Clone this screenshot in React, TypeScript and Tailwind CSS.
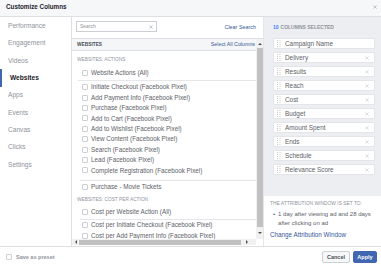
import React from "react";

const sideItems = ["Performance", "Engagement", "Videos", "Websites", "Apps", "Events", "Canvas", "Clicks", "Settings"];

const pixelEvents = [
  "Initiate Checkout (Facebook Pixel)",
  "Add Payment Info (Facebook Pixel)",
  "Purchase (Facebook Pixel)",
  "Add to Cart (Facebook Pixel)",
  "Add to Wishlist (Facebook Pixel)",
  "View Content (Facebook Pixel)",
  "Search (Facebook Pixel)",
  "Lead (Facebook Pixel)",
  "Complete Registration (Facebook Pixel)",
];

const selected = [
  "Campaign Name",
  "Delivery",
  "Results",
  "Reach",
  "Cost",
  "Budget",
  "Amount Spent",
  "Ends",
  "Schedule",
  "Relevance Score",
];

function Cross({ size = 5, color = "#90949c" }: { size?: number; color?: string }) {
  return (
    <svg width={size} height={size} viewBox="0 0 10 10">
      <path d="M1 1L9 9M9 1L1 9" stroke={color} strokeWidth="1.3" />
    </svg>
  );
}

function Box() {
  return <span className="w-[6px] h-[6px] shrink-0 rounded-[1px] border border-[#ccd0d5] bg-white" />;
}

function Row({ label, h = "h-[10.4px]" }: { label: string; h?: string }) {
  return (
    <div className={`flex items-center ${h} pl-[10px] gap-[3px] whitespace-nowrap`}>
      <Box />
      <span className="text-[6.3px] text-[#5d6168]">{label}</span>
    </div>
  );
}

function Handle() {
  return (
    <svg width="4" height="8" viewBox="0 0 4 8" className="shrink-0">
      {[0, 1, 2, 3].map((r) =>
        [0, 1].map((c) => <rect key={`${r}-${c}`} x={c * 2.5} y={r * 2} width="1" height="1" fill="#c4c8ce" />)
      )}
    </svg>
  );
}

export default function App() {
  return (
    <div className="w-[381px] h-[267px] bg-white flex flex-col overflow-hidden font-['Liberation_Sans',Arial,sans-serif]">
      {/* header */}
      <div className="h-[17px] shrink-0 bg-[#f6f7f9] border-b border-[#dddfe2] flex items-center justify-between pl-[6px] pr-[4px] pb-[2px]">
        <span className="text-[6.3px] font-bold text-[#1d2129]">Customize Columns</span>
        <Cross size={4} />
      </div>

      {/* body */}
      <div className="flex h-[229px] shrink-0">
        {/* sidebar */}
        <div className="w-[72px] shrink-0 border-r border-[#dddfe2] flex flex-col">
          {sideItems.map((s) => (
            <div
              key={s}
              className={`h-[17.4px] flex items-center pl-[8px] text-[6.6px] ${
                s === "Websites" ? "font-bold text-[#1d2129] border-l-2 border-[#4267b2] pl-[6px]" : "text-[#90949c]"
              }`}
            >
              {s}
            </div>
          ))}
        </div>

        {/* middle */}
        <div className="w-[191px] shrink-0 flex flex-col">
          <div className="h-[21px] shrink-0 flex items-start justify-between pl-[4px] pr-[7px] pt-[4px]">
            <div className="w-[81px] h-[11px] border border-[#ccd0d5] bg-white flex items-center justify-between px-[3px]">
              <span className="text-[5px] text-[#90949c]">Search</span>
              <Cross size={4} color="#90949c" />
            </div>
            <span className="text-[5.4px] text-[#365899] mt-[2px]">Clear Search</span>
          </div>

          <div className="flex-1 flex flex-col border-t border-[#dddfe2] min-h-0">
            <div className="flex flex-1 min-h-0">
              <div className="w-[184px] shrink-0 overflow-hidden">
                <div className="h-[12px] bg-[#f5f6f7] border-b border-[#dddfe2] flex items-center justify-between pl-[5px] pr-[1px]">
                  <span className="text-[4.8px] font-bold text-[#4b4f56]">WEBSITES</span>
                  <span className="text-[5.3px] text-[#365899]">Select All Columns</span>
                </div>
                <div className="h-[16px] flex items-center pl-[5px] pt-[2px] text-[4.8px] text-[#90949c]">WEBSITES: ACTIONS</div>
                <Row label="Website Actions (All)" h="h-[12px]" />
                <div className="ml-[6px] mt-[1px] border-t border-[#e5e6e9]" />
                <div className="pt-[1px] pb-[4px]">
                  {pixelEvents.map((p) => (
                    <Row key={p} label={p} />
                  ))}
                </div>
                <div className="ml-[8px] border-t border-[#e5e6e9]" />
                <Row label="Purchase - Movie Tickets" h="h-[12px]" />
                <div className="h-[14px] flex items-center pl-[5px] text-[4.8px] text-[#90949c]">WEBSITES: COST PER ACTION</div>
                <Row label="Cost per Website Action (All)" h="h-[11px]" />
                <div className="ml-[8px] mt-[1px] border-t border-[#e5e6e9]" />
                <Row label="Cost per Initiate Checkout (Facebook Pixel)" h="h-[11px]" />
                <Row label="Cost per Add Payment Info (Facebook Pixel)" h="h-[11px]" />
              </div>
              {/* vertical scrollbar */}
              <div className="w-[7px] shrink-0 bg-[#f1f1f1] flex flex-col items-center">
                <div className="h-[9px] flex items-center">
                  <span className="w-0 h-0 border-l-[2px] border-r-[2px] border-b-[2px] border-l-transparent border-r-transparent border-b-[#505050]" />
                </div>
                <div className="w-[6px] flex-1 bg-[#c1c1c1]" />
                <div className="h-[12px] flex items-center">
                  <span className="w-0 h-0 border-l-[2px] border-r-[2px] border-t-[2px] border-l-transparent border-r-transparent border-t-[#505050]" />
                </div>
              </div>
            </div>
            {/* horizontal scrollbar */}
            <div className="h-[6px] shrink-0 flex bg-[#f1f1f1] mb-[1px]">
              <div className="w-[7px] flex items-center justify-center">
                <span className="w-0 h-0 border-t-[2px] border-b-[2px] border-r-[2px] border-t-transparent border-b-transparent border-r-[#505050]" />
              </div>
              <div className="w-[162px] h-[5px] mt-[0.5px] bg-[#c1c1c1]" />
              <div className="flex-1 flex items-center justify-end pr-[8px]">
                <span className="w-0 h-0 border-t-[2px] border-b-[2px] border-l-[2px] border-t-transparent border-b-transparent border-l-[#505050]" />
              </div>
              <div className="w-[7px] bg-white" />
            </div>
          </div>
        </div>

        {/* right panel */}
        <div className="flex-1 flex flex-col border-l border-[#e5e6e9]">
          <div className="h-[179px] shrink-0 bg-[#eceef1] pl-[9px] pr-[6px]">
            <div className="h-[21px] flex items-center text-[5px] font-bold text-[#90949c]">
              <span className="text-[#4080ff] mr-[2px]">10</span>COLUMNS SELECTED
            </div>
            {selected.map((s, i) => (
              <div
                key={s}
                className="h-[11px] mb-[3px] bg-white border border-[#e3e5e8] rounded-[1px] flex items-center pl-[3px] pr-[5px] gap-[4px]"
              >
                <Handle />
                <span className="flex-1 text-[6.4px] text-[#5d6168] whitespace-nowrap">{s}</span>
                {i > 0 && <Cross size={4} color="#bec3c9" />}
              </div>
            ))}
          </div>
          <div className="flex-1 bg-white pl-[6px] pr-[2px] pt-[5px]">
            <div className="text-[4.9px] text-[#90949c] leading-[6px]">THE ATTRIBUTION WINDOW IS SET TO:</div>
            <div className="flex mt-[3px] pl-[3px] gap-[3px] text-[6px] leading-[9px] text-[#5d6168]">
              <span>•</span>
              <span>1 day after viewing ad and 28 days after clicking on ad</span>
            </div>
            <div className="mt-[2px] text-[6.3px] text-[#365899]">Change Attribution Window</div>
          </div>
        </div>
      </div>

      {/* footer */}
      <div className="flex-1 border-t border-[#dddfe2] flex items-center justify-between pl-[6px] pr-[4px]">
        <div className="flex items-center gap-[4px]">
          <Box />
          <span className="text-[5.5px] font-bold text-[#90949c]">Save as preset</span>
        </div>
        <div className="flex items-center gap-[3px]">
          <div className="w-[28px] h-[12px] border border-[#ccd0d5] bg-[#f6f7f9] rounded-[2px] flex items-center justify-center text-[5.5px] font-bold text-[#4b4f56]">
            Cancel
          </div>
          <div className="w-[24px] h-[12px] bg-[#4267b2] border border-[#4267b2] rounded-[2px] flex items-center justify-center text-[5.5px] font-bold text-white">
            Apply
          </div>
        </div>
      </div>
    </div>
  );
}
